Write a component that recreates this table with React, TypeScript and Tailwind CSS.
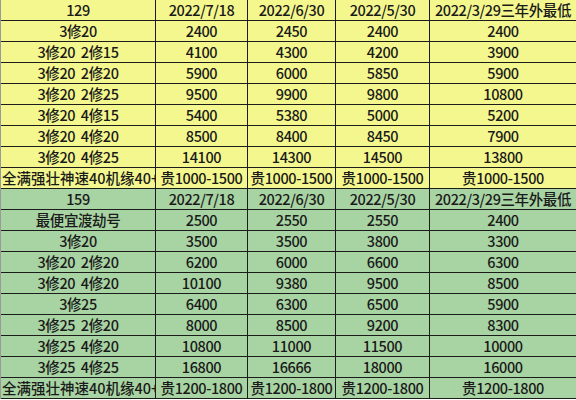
import React from "react";

const dates = ["2022/7/18", "2022/6/30", "2022/5/30", "2022/3/29三年外最低"];

const sections = [
  {
    id: "129",
    bg: "bg-[#f4f78d]",
    rows: [
      ["3修20", "2400", "2450", "2400", "2400"],
      ["3修20  2修15", "4100", "4300", "4200", "3900"],
      ["3修20  2修20", "5900", "6000", "5850", "5900"],
      ["3修20  2修25", "9500", "9900", "9800", "10800"],
      ["3修20  4修15", "5400", "5380", "5000", "5200"],
      ["3修20  4修20", "8500", "8400", "8450", "7900"],
      ["3修20  4修25", "14100", "14300", "14500", "13800"],
    ],
    price: "贵1000-1500",
  },
  {
    id: "159",
    bg: "bg-[#a8d3a3]",
    rows: [
      ["最便宜渡劫号", "2500", "2550", "2550", "2400"],
      ["3修20", "3500", "3500", "3800", "3300"],
      ["3修20  2修20", "6200", "6000", "6600", "6300"],
      ["3修20  4修20", "10100", "9380", "9500", "8500"],
      ["3修25", "6400", "6300", "6500", "5900"],
      ["3修25  2修20", "8000", "8500", "9200", "8300"],
      ["3修25  4修20", "10800", "11000", "11500", "10000"],
      ["3修25  4修25", "16800", "16666", "18000", "16000"],
    ],
    price: "贵1200-1800",
  },
];

function Cell({ children, left }: { children: React.ReactNode; left?: boolean }) {
  return (
    <div
      className={
        left
          ? "h-[21px] border-r border-b border-[#1c1c1c] overflow-hidden whitespace-nowrap flex items-center pl-[1px]"
          : "h-[21px] border-r border-b border-[#1c1c1c] overflow-hidden whitespace-pre flex items-center justify-center tracking-[-0.4px]"
      }
    >
      {children}
    </div>
  );
}

export default function App() {
  return (
    <div
      className="w-[576px] h-[400px] bg-white text-[#1a1a1a] text-[14.5px] leading-none font-medium"
      style={{ fontFamily: '"Noto Sans CJK SC", "Noto Sans", sans-serif' }}
    >
      {sections.map((s) => (
        <div
          key={s.id}
          className={`grid grid-cols-[155px_92px_88px_94px_147px] border-l border-[#9a9a9a] ${s.bg}`}
        >
          <Cell>{s.id}</Cell>
          {dates.map((d) => (
            <Cell key={d}>{d}</Cell>
          ))}
          {s.rows.map((r, i) => (
            <React.Fragment key={i}>
              {r.map((c, j) => (
                <Cell key={j}>{c}</Cell>
              ))}
            </React.Fragment>
          ))}
          <Cell left>全满强壮神速40机缘40+</Cell>
          {dates.map((d) => (
            <Cell key={d}>{s.price}</Cell>
          ))}
        </div>
      ))}
    </div>
  );
}
